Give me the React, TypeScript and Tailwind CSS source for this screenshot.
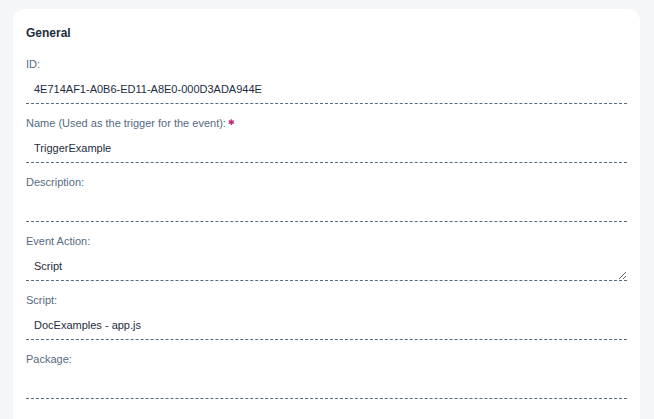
import React from 'react';

type Field = {
  label: string;
  value: string;
  required?: boolean;
  textarea?: boolean;
};

const FIELDS: Field[] = [
  { label: 'ID:', value: '4E714AF1-A0B6-ED11-A8E0-000D3ADA944E' },
  { label: 'Name (Used as the trigger for the event):', value: 'TriggerExample', required: true },
  { label: 'Description:', value: '' },
  { label: 'Event Action:', value: 'Script', textarea: true },
  { label: 'Script:', value: 'DocExamples - app.js' },
  { label: 'Package:', value: '' },
];

function FormField({ field }: { field: Field }) {
  return (
    <div className="flex flex-col">
      <label className="text-[11px] leading-[18px] text-[#556b82]">
        {field.label}
        {field.required && <span className="ml-[2px] text-[#c0267a] text-[8px] align-top">✱</span>}
      </label>
      {field.textarea ? (
        <textarea
          readOnly
          rows={1}
          value={field.value}
          className="mt-[2px] h-[29px] resize-y border-0 border-b border-dashed border-[#556b82] bg-transparent px-2 py-[6px] text-[11px] leading-[16px] text-[#1d2d3e] outline-none overflow-hidden"
        />
      ) : (
        <input
          readOnly
          value={field.value}
          className="mt-[2px] h-[29px] border-0 border-b border-dashed border-[#556b82] bg-transparent px-2 text-[11px] text-[#1d2d3e] outline-none"
        />
      )}
    </div>
  );
}

export default function App() {
  return (
    <div
      className="h-[419px] overflow-hidden bg-[#f5f6f7] pl-[13px] pr-[14px] pt-[9px]"
      style={{ fontFamily: '"Liberation Sans", Arial, sans-serif' }}
    >
      <div className="rounded-t-[12px] bg-white px-[13px] pt-[15px] pb-6 min-h-[420px]">
        <h2 className="text-[12px] font-bold leading-[18px] text-[#1d2d3e]">General</h2>
        <div className="mt-[13px] flex flex-col gap-[10px]">
          {FIELDS.map((f) => (
            <FormField key={f.label} field={f} />
          ))}
        </div>
      </div>
    </div>
  );
}
